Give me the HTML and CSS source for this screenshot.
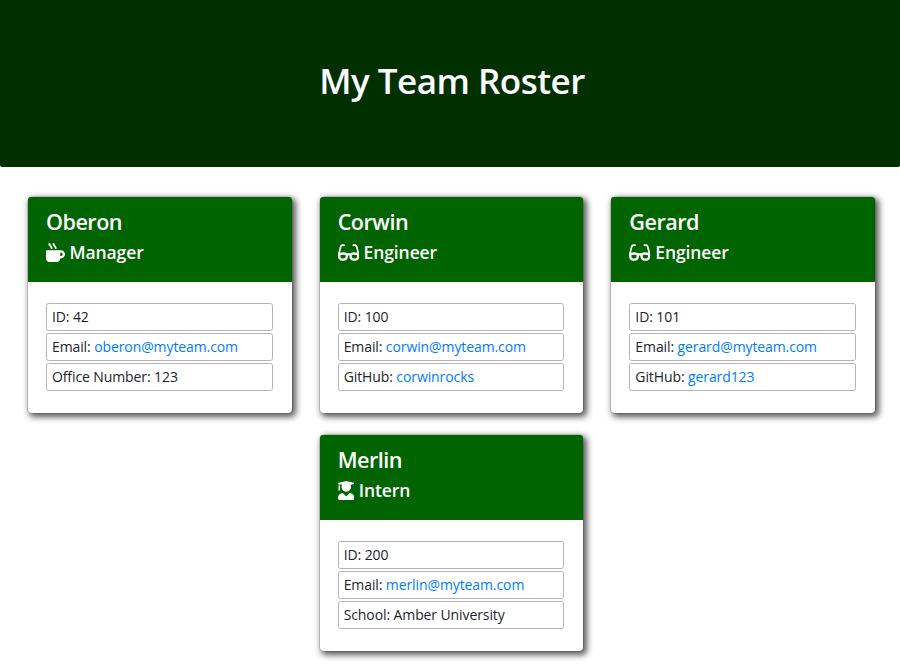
FILE: index.html
```html
<!DOCTYPE html>
<html lang="en">
<head>
<meta charset="utf-8">
<title>My Team Roster</title>
<link rel="stylesheet" href="styles.css">
</head>
<body>
<svg class="sprite" aria-hidden="true">
<symbol id="mug" viewBox="0 0 512 512"><path d="M127.1 146.5c1.3 7.7 8 13.5 16 13.5h16.5c9.8 0 17.6-8.5 16.3-18-3.8-28.2-16.4-54.2-36.6-74.7-14.4-14.7-23.6-33.3-26.4-53.5C111.8 5.9 105 0 96.8 0H80.4C70.6 0 63 8.5 64.1 18c3.9 31.9 18 61.3 40.6 84.4 12 12.2 19.7 27.5 22.4 44.1zm112 0c1.3 7.7 8 13.5 16 13.5h16.5c9.8 0 17.6-8.5 16.3-18-3.8-28.2-16.4-54.2-36.6-74.7-14.4-14.7-23.6-33.3-26.4-53.5C223.8 5.9 217 0 208.8 0h-16.4c-9.8 0-17.5 8.5-16.3 18 3.9 31.9 18 61.3 40.6 84.4 12 12.2 19.7 27.5 22.4 44.1zM400 192H32c-17.7 0-32 14.3-32 32v192c0 53 43 96 96 96h192c53 0 96-43 96-96h16c61.8 0 112-50.2 112-112s-50.2-112-112-112zm0 160h-16v-96h16c26.5 0 48 21.5 48 48s-21.5 48-48 48z"/></symbol>
<symbol id="glasses" viewBox="0 0 576 512"><path d="M574.1 280.37L528.75 98.66c-5.91-23.7-21.59-44.05-43-55.81-21.44-11.73-46.97-14.11-70.19-6.33l-15.25 5.08c-8.39 2.79-12.92 11.86-10.12 20.24l5.06 15.18c2.79 8.38 11.85 12.91 20.23 10.12l13.18-4.39c10.87-3.62 23-3.57 33.16 1.73 10.29 5.37 17.57 14.56 20.37 25.82l38.46 153.82c-22.19-6.81-49.79-12.46-81.2-12.46-34.77 0-73.98 7.02-114.85 26.74h-73.18c-40.87-19.74-80.08-26.75-114.86-26.75-31.42 0-59.02 5.65-81.21 12.46l38.46-153.83c2.79-11.25 10.09-20.45 20.38-25.81 10.16-5.3 22.28-5.35 33.15-1.73l13.17 4.39c8.38 2.79 17.44-1.74 20.23-10.12l5.06-15.18c2.8-8.38-1.73-17.45-10.12-20.24l-15.25-5.08c-23.22-7.78-48.75-5.41-70.19 6.33-21.41 11.77-37.09 32.11-43 55.8L1.9 280.37A64.218 64.218 0 0 0 0 295.86v70.25C0 429.01 51.58 480 115.2 480h37.12c60.28 0 110.37-45.94 114.88-105.37l2.93-38.63h35.75l2.93 38.63C313.31 434.06 363.4 480 423.68 480h37.12c63.62 0 115.2-50.99 115.2-113.88v-70.25c0-5.23-.64-10.43-1.9-15.5zm-370.72 89.42c-1.97 25.91-24.4 46.21-51.06 46.21H115.2C86.97 416 64 393.62 64 366.11v-37.54c18.12-6.49 43.42-12.92 72.58-12.92 23.86 0 47.26 4.33 69.93 12.92l-3.13 41.22zM512 366.12c0 27.51-22.97 49.88-51.2 49.88h-37.12c-26.67 0-49.1-20.3-51.06-46.21l-3.13-41.22c22.67-8.59 46.08-12.92 69.95-12.92 29.12 0 54.43 6.44 72.55 12.93v37.54z"/></symbol>
<symbol id="graduate" viewBox="0 0 448 512"><path d="M319.4 320.6L224 416l-95.4-95.4C57.1 323.7 0 382.2 0 454.4v9.6c0 26.5 21.5 48 48 48h352c26.5 0 48-21.5 48-48v-9.6c0-72.2-57.1-130.7-128.6-133.8zM13.6 79.8l6.4 1.5v58.4c-7 4.2-12 11.5-12 20.3 0 8.4 4.6 15.4 11.1 19.7L3.5 242c-1.7 6.9 2.1 14 7.6 14h41.8c5.5 0 9.3-7.1 7.6-14l-15.6-62.3C51.4 175.4 56 168.4 56 160c0-8.8-5-16.1-12-20.3V87.1l66 15.9c-8.6 17.2-14 36.4-14 57 0 70.7 57.3 128 128 128s128-57.3 128-128c0-20.6-5.3-39.8-14-57l96.3-23.2c18.2-4.4 18.2-27.1 0-31.5l-190.4-46c-13-3.1-26.7-3.1-39.7 0L13.6 48.2c-18.1 4.4-18.1 27.2 0 31.6z"/></symbol>
</svg>
<header class="banner"><h1>My Team Roster</h1></header>
<main class="team">
<section class="card">
<div class="card-head"><h2>Oberon</h2><h3><svg class="icon"><use href="#mug"/></svg><span>Manager</span></h3></div>
<ul><li>ID: 42</li><li>Email: <a href="mailto:oberon@myteam.com">oberon@myteam.com</a></li><li>Office Number: 123</li></ul>
</section>
<section class="card">
<div class="card-head"><h2>Corwin</h2><h3><svg class="icon wide"><use href="#glasses"/></svg><span>Engineer</span></h3></div>
<ul><li>ID: 100</li><li>Email: <a href="mailto:corwin@myteam.com">corwin@myteam.com</a></li><li>GitHub: <a href="#">corwinrocks</a></li></ul>
</section>
<section class="card">
<div class="card-head"><h2>Gerard</h2><h3><svg class="icon wide"><use href="#glasses"/></svg><span>Engineer</span></h3></div>
<ul><li>ID: 101</li><li>Email: <a href="mailto:gerard@myteam.com">gerard@myteam.com</a></li><li>GitHub: <a href="#">gerard123</a></li></ul>
</section>
<section class="card">
<div class="card-head"><h2>Merlin</h2><h3><svg class="icon narrow"><use href="#graduate"/></svg><span>Intern</span></h3></div>
<ul><li>ID: 200</li><li>Email: <a href="mailto:merlin@myteam.com">merlin@myteam.com</a></li><li>School: Amber University</li></ul>
</section>
</main>
</body>
</html>
```

FILE: styles.css
```css
* { box-sizing: border-box; }
body {
  margin: 0;
  min-height: 666px;
  background: #fff;
  color: #212529;
  font-family: "Open Sans", "Noto Sans", sans-serif;
  font-size: 14px;
}
h1, h2, h3, ul { margin: 0; padding: 0; }
.sprite { display: none; }
.banner {
  height: 167px;
  padding: 59px 0 0 4px;
  background: #002f00;
  border-radius: 0 0 2px 2px;
  color: #fff;
  text-align: center;
}
h1 { font-size: 35px; line-height: 43px; font-weight: 600; letter-spacing: -.5px; }
.team {
  display: flex;
  flex-wrap: wrap;
  justify-content: center;
  gap: 22.5px 28px;
  padding: 30px 22px 15px 25px;
}
.card {
  width: 263.7px;
  height: 215.5px;
  border-radius: 4px;
  background: #fff;
  box-shadow: 0 0 0 .5px rgba(0, 0, 0, .2), 2.5px 2.5px 6px 1px rgba(0, 0, 0, .65);
}
.card-head {
  height: 85px;
  padding: 11px 18px 0;
  background: #006400;
  border-radius: 3px 3px 0 0;
  color: #fff;
}
h2 { font-size: 21.6px; line-height: 27px; font-weight: 600; letter-spacing: -.5px; }
h3 {
  display: flex;
  align-items: center;
  gap: 4.5px;
  height: 22px;
  margin-top: 6px;
  font-size: 17.5px;
  line-height: 22px;
  font-weight: 600;
  letter-spacing: -.1px;
}
.icon { width: 19px; height: 19px; fill: currentColor; }
.wide { width: 21.4px; }
.narrow { width: 16.5px; }
ul {
  display: grid;
  gap: 2.5px;
  padding: 21px 19px 0 18px;
  list-style: none;
}
li {
  height: 27.5px;
  padding-left: 5px;
  border: 1px solid #b4b4b4;
  border-radius: 2.5px;
  line-height: 26px;
  letter-spacing: -.1px;
  white-space: nowrap;
}
a { color: #007bff; text-decoration: none; }
```
